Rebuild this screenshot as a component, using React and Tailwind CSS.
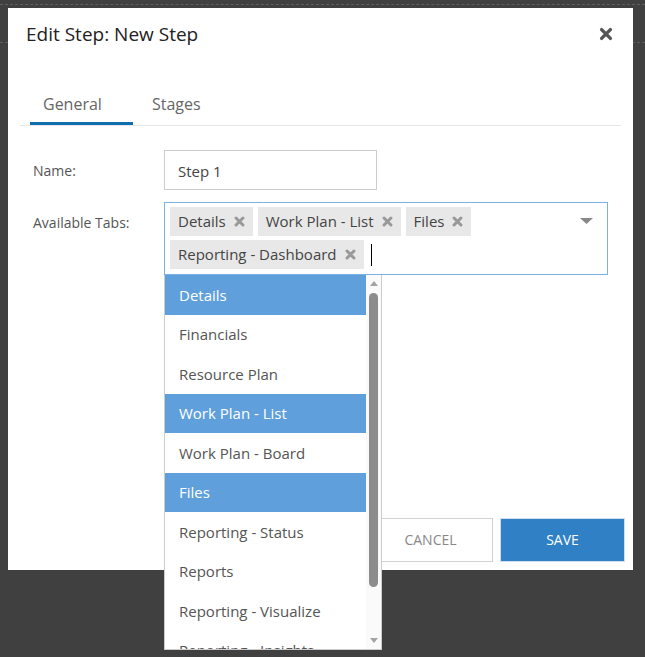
import React from "react";

function XIcon({ className, w = 3.2 }) {
  return (
    <svg viewBox="0 0 14 14" className={className} fill="none">
      <path d="M2.6 2.6 L11.4 11.4 M11.4 2.6 L2.6 11.4" stroke="currentColor" strokeWidth={w} strokeLinecap="round" />
    </svg>
  );
}

function Chip({ label }) {
  return (
    <div className="flex h-[29px] items-center bg-[#e8e8e8] pl-[8px] pr-[8px] text-[15px] text-[#444]">
      <span>{label}</span>
      <XIcon className="ml-[8px] h-[11px] w-[11px] text-[#999]" w={3.8} />
    </div>
  );
}

const items = [
  ["Details", true],
  ["Financials", false],
  ["Resource Plan", false],
  ["Work Plan - List", true],
  ["Work Plan - Board", false],
  ["Files", true],
  ["Reporting - Status", false],
  ["Reports", false],
  ["Reporting - Visualize", false],
  ["Reporting - Insights", false],
];

export default function App() {
  return (
    <div className="relative h-[657px] w-[645px] overflow-hidden bg-[#404040] font-['Open_Sans',sans-serif]">
      {/* background page behind overlay */}
      <div className="pt-[4px]">
        <div className="border-t border-dashed border-[#5e5e5e]" />
        <div className="mt-[37px] border-t border-dashed border-[#5e5e5e]" />
      </div>

      {/* modal */}
      <div className="absolute left-[8px] top-[8px] flex h-[562px] w-[625px] flex-col bg-white">
        {/* header */}
        <div className="flex items-center justify-between pl-[18px] pr-[20px] pt-[13px]">
          <h1 className="text-[19px] leading-[26px] text-[#222]">Edit Step: New Step</h1>
          <XIcon className="h-[14px] w-[14px] text-[#555]" w={3.4} />
        </div>

        {/* tabs */}
        <div className="mx-[12px] mt-[38px] flex border-b border-[#e6e6e6]">
          <div className="ml-[10px] flex h-[40px] w-[103px] items-center border-b-[3px] border-[#106eb0] pl-[13px] text-[16px] text-[#666]">
            General
          </div>
          <div className="flex h-[40px] items-center border-b-[3px] border-transparent pl-[19px] text-[16px] text-[#666]">
            Stages
          </div>
        </div>

        {/* form */}
        <div className="mt-[24px] flex flex-col gap-[12px] pl-[25px]">
          <div className="flex items-center">
            <div className="w-[131px] pt-[1px] text-[14px] text-[#555]">Name:</div>
            <div className="flex h-[40px] w-[213px] items-center border border-[#ccc] pl-[13px] pt-[2px] text-[15px] text-[#444]">
              Step 1
            </div>
          </div>
          <div className="flex items-start">
            <div className="w-[131px] pt-[11px] text-[14px] leading-[20px] text-[#555]">Available Tabs:</div>
            <div className="relative">
              <div className="flex h-[73px] w-[444px] border border-[#7ab0e3]">
                <div className="flex flex-1 flex-wrap content-start items-center gap-x-[5px] gap-y-[4px] pl-[5px] pt-[4px]">
                  <Chip label="Details" />
                  <Chip label="Work Plan - List" />
                  <Chip label="Files" />
                  <Chip label="Reporting - Dashboard" />
                  <div className="ml-[2px] h-[22px] w-px bg-black" />
                </div>
                <div className="pl-[10px] pr-[14px] pt-[15px]">
                  <svg width="13" height="6" viewBox="0 0 13 6">
                    <path d="M0 0 H13 L6.5 6 Z" fill="#888" />
                  </svg>
                </div>
              </div>

              {/* dropdown list */}
              <div className="absolute left-0 top-full z-10 flex h-[375px] w-[218px] border-x border-b border-[#ccc] bg-white">
                <div className="w-[201px] overflow-hidden">
                  {items.map(([label, sel]) => (
                    <div
                      key={label}
                      className={
                        sel
                          ? "flex h-[39.5px] shrink-0 items-center bg-[#5fa0dc] pl-[14px] text-[15px] text-white"
                          : "flex h-[39.5px] shrink-0 items-center pl-[14px] text-[15px] text-[#555]"
                      }
                    >
                      {label}
                    </div>
                  ))}
                </div>
                <div className="flex w-[15px] flex-col items-center bg-[#fafafa] pt-[6px]">
                  <svg width="8" height="5" viewBox="0 0 8 5">
                    <path d="M0 5 H8 L4 0 Z" fill="#a3a3a3" />
                  </svg>
                  <div className="mt-[7px] h-[294px] w-[9px] rounded-full bg-[#8c8c8c]" />
                  <svg className="mt-[51px]" width="8" height="5" viewBox="0 0 8 5">
                    <path d="M0 0 H8 L4 5 Z" fill="#a3a3a3" />
                  </svg>
                </div>
              </div>
            </div>
          </div>
        </div>

        {/* footer */}
        <div className="mt-auto flex justify-end gap-[7px] pb-[8px] pr-[8px]">
          <button className="h-[44px] w-[125px] border border-[#d2d2d2] bg-white pb-[2px] text-[14px] text-[#888]">CANCEL</button>
          <button className="h-[44px] w-[125px] border border-[#d0dcea] bg-[#2f80c5] pb-[2px] text-[14px] text-white">SAVE</button>
        </div>
      </div>
    </div>
  );
}
